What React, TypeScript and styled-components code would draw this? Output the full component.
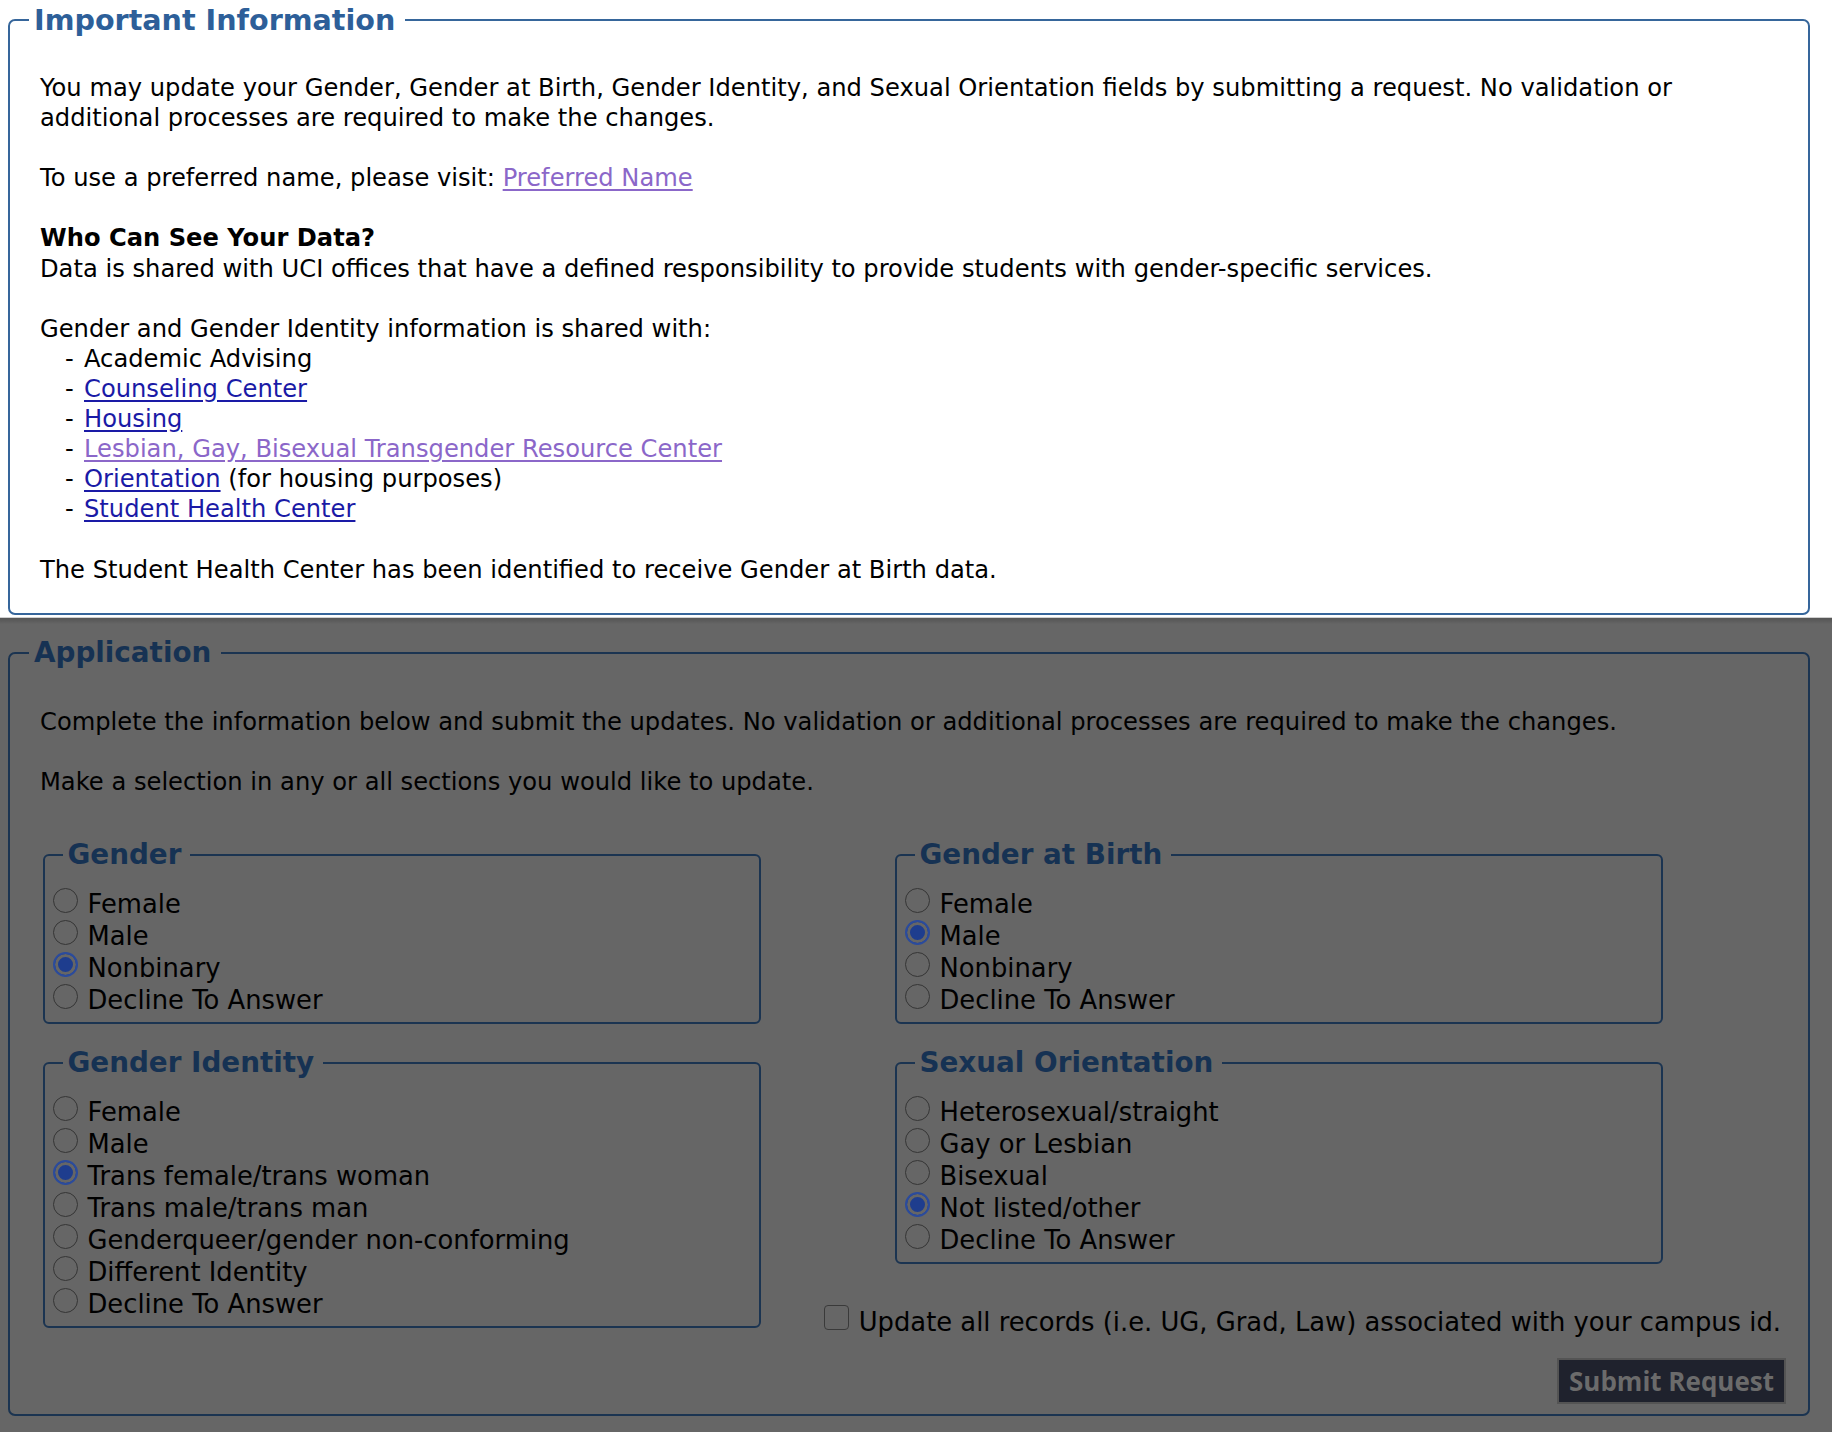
import React from "react";
import styled, { createGlobalStyle } from "styled-components";

const GlobalStyle = createGlobalStyle`
  html, body {
    margin: 0;
    padding: 0;
    background: #ffffff;
  }
  body {
    font-family: "DejaVu Sans", Verdana, sans-serif;
    font-size: 24.2px;
    line-height: 30.1px;
    color: #000000;
  }
  #root {
    min-height: 100vh;
    display: flex;
    flex-direction: column;
  }
`;

const TopArea = styled.div`
  background: #ffffff;
  padding: 5px 22px 2px 8px;
`;

const Backdrop = styled.div`
  flex: 1;
  background: linear-gradient(#cfcfcf 0, #cfcfcf 1px, #565656 1px, #5c5c5c 4px, #666666 7px);
  padding: 21px 22px 18px 8px;
`;

const Fieldset = styled.fieldset<{ $dim?: boolean }>`
  margin: 0;
  min-width: 0;
  border: 2px solid ${(p) => (p.$dim ? "#1b3451" : "#36669b")};
  border-radius: 7px;
  padding: ${(p) => (p.$dim ? "39px 22px 10px 30px" : "38px 30px 28px 30px")};
`;

const Legend = styled.legend<{ $dim?: boolean }>`
  font-weight: bold;
  font-size: ${(p) => (p.$dim ? "27.8px" : "28.6px")};
  line-height: 30px;
  color: ${(p) => (p.$dim ? "#163253" : "#2d5f99")};
  padding: 0 10px 0 5px;
  margin-left: -11px;
`;

const Paragraph = styled.p`
  margin: 0 0 30.1px;
  &:last-child {
    margin-bottom: 0;
  }
`;

const Heading = styled.strong`
  display: block;
  font-weight: bold;
`;

const List = styled.ul`
  list-style: none;
  margin: 0;
  padding: 0 0 0 25px;
`;

const Item = styled.li`
  display: flex;
`;

const Dash = styled.span`
  width: 19px;
  flex-shrink: 0;
`;

const Link = styled.a<{ $visited?: boolean }>`
  color: ${(p) => (p.$visited ? "#8b67c9" : "#1a1aa6")};
  text-decoration: underline;
  text-underline-offset: 3px;
`;

const Columns = styled.div`
  display: flex;
  margin: 43px 0 0 3px;
`;

const LeftCol = styled.div`
  width: 718px;
  flex-shrink: 0;
  display: flex;
  flex-direction: column;
  align-items: stretch;
  gap: 24px;
`;

const RightCol = styled.div`
  flex: 1;
  display: flex;
  flex-direction: column;
  align-items: flex-start;
  gap: 24px;
`;

const GroupFieldset = styled.fieldset<{ $right?: boolean }>`
  margin: 0 0 0 ${(p) => (p.$right ? "134px" : "0")};
  width: ${(p) => (p.$right ? "768px" : "auto")};
  box-sizing: border-box;
  min-width: 0;
  border: 2px solid #1b3451;
  border-radius: 6px;
  padding: 18px 10px 6px 7.5px;
`;

const GroupLegend = styled.legend`
  font-weight: bold;
  font-size: 27.8px;
  line-height: 30px;
  color: #163253;
  padding: 0 9px 0 5px;
  margin-left: 10px;
`;

const OptionRow = styled.label`
  display: flex;
  align-items: flex-start;
  gap: 10px;
  height: 32px;
  font-size: 25.8px;
  line-height: 32px;
  white-space: nowrap;
`;

const Radio = styled.input.attrs({ type: "radio" })`
  appearance: none;
  -webkit-appearance: none;
  margin: 0;
  width: 25px;
  height: 25px;
  flex-shrink: 0;
  box-sizing: border-box;
  border-radius: 50%;
  border: 1.5px solid #353535;
  background: transparent;
  &:checked {
    border: 2px solid #2b4b9c;
    background: #1e3d8e;
    box-shadow: inset 0 0 0 3px #666666;
  }
`;

const CheckRow = styled.label`
  align-self: stretch;
  display: flex;
  justify-content: flex-end;
  align-items: flex-start;
  gap: 10px;
  margin-top: 19px;
  padding-right: 5px;
  font-size: 25.8px;
  line-height: 30px;
  white-space: nowrap;
`;

const Checkbox = styled.input.attrs({ type: "checkbox" })`
  appearance: none;
  -webkit-appearance: none;
  margin: -2px 0 0;
  width: 25px;
  height: 25px;
  flex-shrink: 0;
  box-sizing: border-box;
  border: 1.5px solid #3a3a3a;
  border-radius: 4px;
  background: transparent;
`;

const SubmitButton = styled.button`
  align-self: flex-end;
  margin-top: -3px;
  width: 229px;
  height: 46px;
  padding: 0;
  border: 2px solid #545454;
  border-radius: 0;
  background: #1f222d;
  color: #6b6b6b;
  font-family: "Open Sans", "DejaVu Sans", sans-serif;
  font-weight: 700;
  font-size: 26px;
  line-height: 1;
`;

type Group = { title: string; name: string; options: string[]; selected: number };

const groupsLeft: Group[] = [
  { title: "Gender", name: "gender", options: ["Female", "Male", "Nonbinary", "Decline To Answer"], selected: 2 },
  {
    title: "Gender Identity",
    name: "identity",
    options: [
      "Female",
      "Male",
      "Trans female/trans woman",
      "Trans male/trans man",
      "Genderqueer/gender non-conforming",
      "Different Identity",
      "Decline To Answer",
    ],
    selected: 2,
  },
];

const groupsRight: Group[] = [
  { title: "Gender at Birth", name: "birth", options: ["Female", "Male", "Nonbinary", "Decline To Answer"], selected: 1 },
  {
    title: "Sexual Orientation",
    name: "orientation",
    options: ["Heterosexual/straight", "Gay or Lesbian", "Bisexual", "Not listed/other", "Decline To Answer"],
    selected: 3,
  },
];

const OptionGroup: React.FC<{ group: Group; right?: boolean }> = ({ group, right }) => (
  <GroupFieldset $right={right}>
    <GroupLegend>{group.title}</GroupLegend>
    {group.options.map((opt, i) => (
      <OptionRow key={opt}>
        <Radio name={group.name} defaultChecked={i === group.selected} />
        <span>{opt}</span>
      </OptionRow>
    ))}
  </GroupFieldset>
);

export default function App() {
  return (
    <>
      <GlobalStyle />
      <TopArea>
        <Fieldset>
          <Legend>Important Information</Legend>
          <Paragraph>
            You may update your Gender, Gender at Birth, Gender Identity, and Sexual Orientation fields by
            submitting a request. No validation or additional processes are required to make the changes.
          </Paragraph>
          <Paragraph>
            To use a preferred name, please visit: <Link href="#" $visited>Preferred Name</Link>
          </Paragraph>
          <Paragraph>
            <Heading>Who Can See Your Data?</Heading>
            Data is shared with UCI offices that have a defined responsibility to provide students with
            gender-specific services.
          </Paragraph>
          <Paragraph as="div">
            Gender and Gender Identity information is shared with:
            <List>
              <Item>
                <Dash>-</Dash>
                <span>Academic Advising</span>
              </Item>
              <Item>
                <Dash>-</Dash>
                <Link href="#">Counseling Center</Link>
              </Item>
              <Item>
                <Dash>-</Dash>
                <Link href="#">Housing</Link>
              </Item>
              <Item>
                <Dash>-</Dash>
                <Link href="#" $visited>Lesbian, Gay, Bisexual Transgender Resource Center</Link>
              </Item>
              <Item>
                <Dash>-</Dash>
                <span>
                  <Link href="#">Orientation</Link> (for housing purposes)
                </span>
              </Item>
              <Item>
                <Dash>-</Dash>
                <Link href="#">Student Health Center</Link>
              </Item>
            </List>
          </Paragraph>
          <Paragraph>The Student Health Center has been identified to receive Gender at Birth data.</Paragraph>
        </Fieldset>
      </TopArea>
      <Backdrop>
        <Fieldset $dim>
          <Legend $dim>Application</Legend>
          <Paragraph>
            Complete the information below and submit the updates. No validation or additional processes are
            required to make the changes.
          </Paragraph>
          <Paragraph>Make a selection in any or all sections you would like to update.</Paragraph>
          <Columns>
            <LeftCol>
              {groupsLeft.map((g) => (
                <OptionGroup key={g.name} group={g} />
              ))}
            </LeftCol>
            <RightCol>
              {groupsRight.map((g) => (
                <OptionGroup key={g.name} group={g} right />
              ))}
              <CheckRow>
                <Checkbox />
                <span>Update all records (i.e. UG, Grad, Law) associated with your campus id.</span>
              </CheckRow>
              <SubmitButton type="button">Submit Request</SubmitButton>
            </RightCol>
          </Columns>
        </Fieldset>
      </Backdrop>
    </>
  );
}
